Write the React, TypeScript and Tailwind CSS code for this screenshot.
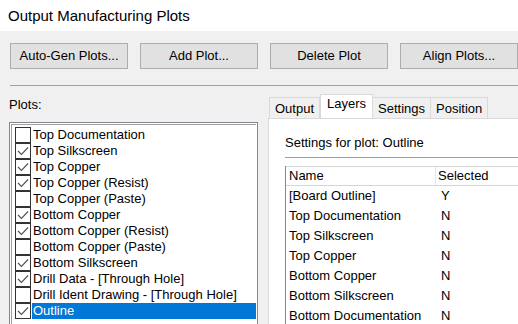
import { useState } from "react";

const plots = [
  { name: "Top Documentation", on: false },
  { name: "Top Silkscreen", on: true },
  { name: "Top Copper", on: true },
  { name: "Top Copper (Resist)", on: true },
  { name: "Top Copper (Paste)", on: false },
  { name: "Bottom Copper", on: true },
  { name: "Bottom Copper (Resist)", on: true },
  { name: "Bottom Copper (Paste)", on: false },
  { name: "Bottom Silkscreen", on: true },
  { name: "Drill Data - [Through Hole]", on: true },
  { name: "Drill Ident Drawing - [Through Hole]", on: false },
  { name: "Outline", on: true },
];

const layers = [
  ["[Board Outline]", "Y"],
  ["Top Documentation", "N"],
  ["Top Silkscreen", "N"],
  ["Top Copper", "N"],
  ["Bottom Copper", "N"],
  ["Bottom Silkscreen", "N"],
  ["Bottom Documentation", "N"],
];

function Check({ on }: { on: boolean }) {
  return (
    <div className="w-[16px] h-[16px] border border-[#333] bg-white -mt-px flex items-center justify-center">
      {on && (
        <svg width="12" height="10" viewBox="0 0 12 10">
          <path d="M1 5 L4.5 8.5 L11 1.5" fill="none" stroke="#555" strokeWidth="1.2" />
        </svg>
      )}
    </div>
  );
}

export default function App() {
  const [selected, setSelected] = useState(11);
  const tabs = ["Output", "Layers", "Settings", "Position"];

  return (
    <div className="w-[518px] h-[324px] overflow-hidden bg-[#f0f0f0] text-[13px] text-black" style={{ fontFamily: '"Liberation Sans", Arial, sans-serif' }}>
      {/* title */}
      <div className="h-[31px] bg-white flex items-center pl-[8px] text-[15px] pt-[2px]">Output Manufacturing Plots</div>

      {/* toolbar */}
      <div className="flex gap-[12px] pl-[10px] pt-[12px]">
        {["Auto-Gen Plots...", "Add Plot...", "Delete Plot", "Align Plots..."].map((b) => (
          <button key={b} className="w-[118px] h-[26px] bg-[#e1e1e1] border border-[#adadad] text-[13px]">
            {b}
          </button>
        ))}
      </div>
      <div className="mt-[16px] ml-[10px] border-t border-[#a0a0a0]" />

      <div className="flex">
        {/* plots list */}
        <div className="w-[268px] shrink-0 pl-[9px]">
          <div className="pt-[9px] h-[36px]">Plots:</div>
          <div className="w-[249px] border border-[#828790] bg-white p-px">
            <div className="border border-[#a0a0a0] border-r-0 pl-[3px] pt-[2px] pb-[40px]">
              {plots.map((p, i) => (
                <div key={p.name} className="flex h-[16px] items-center" onClick={() => setSelected(i)}>
                  <Check on={p.on} />
                  <span className={`ml-[1px] pl-[1px] pr-[2px] leading-[16px] ${i === selected ? "bg-[#0078d7] text-white flex-1" : ""}`}>{p.name}</span>
                </div>
              ))}
            </div>
          </div>
        </div>

        {/* tabs */}
        <div className="flex-1 pt-[8px]">
          <div className="flex items-end h-[24px] pl-[2px]">
            {tabs.map((t) => (
              <div
                key={t}
                className={
                  t === "Layers"
                    ? "h-[24px] px-[6px] bg-white border border-b-0 border-[#d9d9d9] leading-[18px]"
                    : "h-[21px] px-[5px] bg-[#f0f0f0] border border-b-0 border-[#d9d9d9] -ml-px leading-[22px]"
                }
              >
                {t}
              </div>
            ))}
          </div>
          <div className="bg-white border-l border-t border-[#d9d9d9] h-[220px] pl-[16px] pt-[17px]">
            <div className="h-[14px] leading-[14px]">Settings for plot: Outline</div>
            <div className="mt-[7px] border-t border-[#a0a0a0]" />
            <div className="mt-[8px] border-l border-[#828790]">
              <div className="flex h-[20px] border-y border-[#d5d5d5] leading-[18px]">
                <div className="w-[150px] pl-[3px] border-r border-[#e5e5e5]">Name</div>
                <div className="pl-[2px]">Selected</div>
              </div>
              {layers.map(([n, v]) => (
                <div key={n} className="flex h-[20px] leading-[20px]">
                  <div className="w-[150px] pl-[3px]">{n}</div>
                  <div className="pl-[5px]">{v}</div>
                </div>
              ))}
            </div>
          </div>
        </div>
      </div>
    </div>
  );
}
